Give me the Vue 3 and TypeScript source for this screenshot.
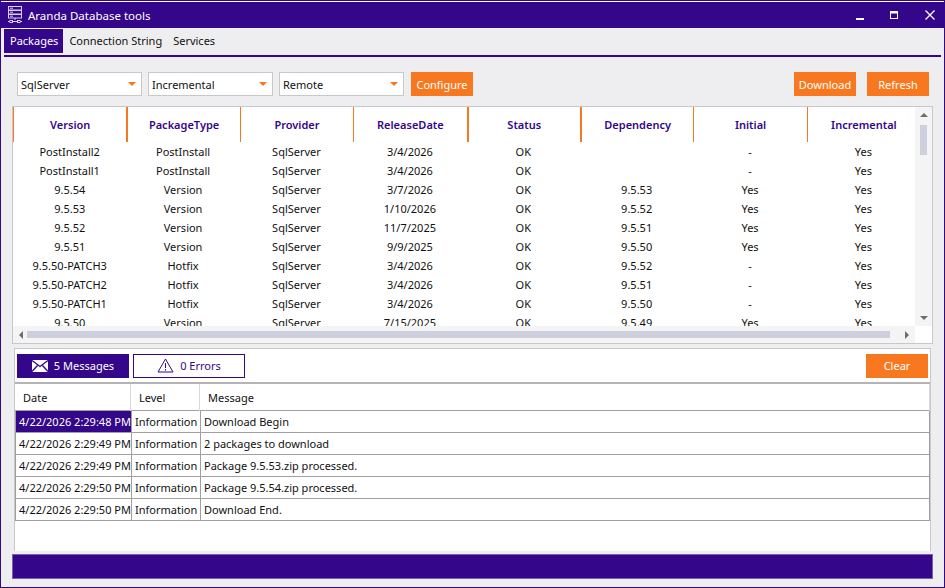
<template>
  <div class="window">
    <div class="titlebar">
      <svg class="app-icon" width="16" height="18" viewBox="0 0 16 18" fill="none" stroke="#d9cfee" stroke-width="1">
        <rect x="1.5" y="0.5" width="13" height="3.5" />
        <rect x="1.5" y="4.5" width="13" height="3.5" />
        <rect x="1.5" y="8.5" width="13" height="3.5" />
        <path d="M3 2.2h3M3 6.2h3M3 10.2h3M8 12v2" />
        <path d="M1 15.5h2M6 15.5h4M13 15.5h2" />
        <rect x="3" y="14.5" width="2.500" height="2" />
        <rect x="10.500" y="14.500" width="2.500" height="2" />
      </svg>
      <span class="app-title">Aranda Database tools</span>
      <div class="win-controls">
        <svg width="12" height="12" viewBox="0 0 12 12"><rect x="2" y="9" width="8" height="2" fill="#fff" /></svg>
        <svg width="12" height="12" viewBox="0 0 12 12" fill="none" stroke="#fff"><rect x="1.500" y="2.500" width="7" height="7" /><path d="M1 3.500h8" stroke-width="2" /></svg>
        <svg width="12" height="12" viewBox="0 0 12 12" fill="none" stroke="#fff" stroke-width="1.300"><path d="M1.500 1.500l9 9M10.500 1.500l-9 9" /></svg>
      </div>
    </div>

    <nav class="menu">
      <a v-for="(m, i) in menu" :key="m" class="menu-item" :class="{ active: i === 0 }">{{ m }}</a>
    </nav>

    <div class="toolbar">
      <div v-for="c in combos" :key="c" class="combo">
        <span>{{ c }}</span>
        <i class="caret"></i>
      </div>
      <button class="btn">Configure</button>
      <div class="spacer"></div>
      <button class="btn">Download</button>
      <button class="btn">Refresh</button>
    </div>

    <section class="packages">
      <div class="pkg-main">
        <div class="pkg-head">
          <div v-for="h in columns" :key="h.name" class="pkg-th" :class="{ thick: h.thick }">{{ h.name }}</div>
        </div>
        <div class="pkg-rows">
          <div v-for="r in packages" :key="r[0]" class="pkg-row">
            <div v-for="(cell, i) in r" :key="i" class="pkg-td">{{ cell }}</div>
          </div>
        </div>
      </div>
      <div class="vscroll">
        <i class="arrow up"></i>
        <div class="vthumb"></div>
        <div class="spacer"></div>
        <i class="arrow down"></i>
      </div>
      <div class="hscroll">
        <i class="arrow left"></i>
        <div class="hthumb"></div>
        <i class="arrow right"></i>
      </div>
      <div class="corner"></div>
    </section>

    <section class="log">
      <div class="log-bar">
        <button class="tab tab-on">
          <svg width="16" height="12" viewBox="0 0 16 12"><path fill="#fff" d="M0 0h16v12H0z" /><path fill="none" stroke="#34068a" stroke-width="1.300" d="M0 .5l8 6 8-6M0 11.500l5.500-6M16 11.500l-5.500-6" /></svg>
          5 Messages
        </button>
        <button class="tab tab-off">
          <svg width="17" height="15" viewBox="0 0 17 15" fill="none" stroke="#34068a"><path d="M8.500 1L1 14h15z" /><path d="M8.500 5v5M8.500 11v1.500" /></svg>
          0 Errors
        </button>
        <div class="spacer"></div>
        <button class="btn btn-clear">Clear</button>
      </div>
      <div class="grid-head">
        <div>Date</div>
        <div>Level</div>
        <div>Message</div>
      </div>
      <div v-for="(l, i) in logs" :key="i" class="grid-row">
        <div class="c-date" :class="{ selected: i === 0 }">{{ l.date }}</div>
        <div>Information</div>
        <div>{{ l.message }}</div>
      </div>
    </section>

    <div class="statusbar"></div>
  </div>
</template>

<script setup lang="ts">
const menu = ['Packages', 'Connection String', 'Services']
const combos = ['SqlServer', 'Incremental', 'Remote']

const columns = [
  { name: 'Version', thick: false },
  { name: 'PackageType', thick: true },
  { name: 'Provider', thick: false },
  { name: 'ReleaseDate', thick: false },
  { name: 'Status', thick: true },
  { name: 'Dependency', thick: true },
  { name: 'Initial', thick: false },
  { name: 'Incremental', thick: false }
]

const packages: string[][] = [
  ['PostInstall2', 'PostInstall', 'SqlServer', '3/4/2026', 'OK', '', '-', 'Yes'],
  ['PostInstall1', 'PostInstall', 'SqlServer', '3/4/2026', 'OK', '', '-', 'Yes'],
  ['9.5.54', 'Version', 'SqlServer', '3/7/2026', 'OK', '9.5.53', 'Yes', 'Yes'],
  ['9.5.53', 'Version', 'SqlServer', '1/10/2026', 'OK', '9.5.52', 'Yes', 'Yes'],
  ['9.5.52', 'Version', 'SqlServer', '11/7/2025', 'OK', '9.5.51', 'Yes', 'Yes'],
  ['9.5.51', 'Version', 'SqlServer', '9/9/2025', 'OK', '9.5.50', 'Yes', 'Yes'],
  ['9.5.50-PATCH3', 'Hotfix', 'SqlServer', '3/4/2026', 'OK', '9.5.52', '-', 'Yes'],
  ['9.5.50-PATCH2', 'Hotfix', 'SqlServer', '3/4/2026', 'OK', '9.5.51', '-', 'Yes'],
  ['9.5.50-PATCH1', 'Hotfix', 'SqlServer', '3/4/2026', 'OK', '9.5.50', '-', 'Yes'],
  ['9.5.50', 'Version', 'SqlServer', '7/15/2025', 'OK', '9.5.49', 'Yes', 'Yes']
]

const logs = [
  { date: '4/22/2026 2:29:48 PM', message: 'Download Begin' },
  { date: '4/22/2026 2:29:49 PM', message: '2 packages to download' },
  { date: '4/22/2026 2:29:49 PM', message: 'Package 9.5.53.zip processed.' },
  { date: '4/22/2026 2:29:50 PM', message: 'Package 9.5.54.zip processed.' },
  { date: '4/22/2026 2:29:50 PM', message: 'Download End.' }
]
</script>

<style>
html, body {
  margin: 0;
  overflow: hidden;
}
</style>

<style scoped>
.window {
  width: 945px;
  height: 588px;
  box-sizing: border-box;
  border: 1px solid #34068a;
  background: #eeeef0;
  display: flex;
  flex-direction: column;
  font-family: "Noto Sans", "Open Sans", sans-serif;
  font-size: 11px;
  color: #111;
  overflow: hidden;
}
.titlebar {
  height: 26px;
  border-top: 1px solid #fff;
  box-sizing: content-box;
  background: #34068a;
  display: flex;
  align-items: center;
  padding-left: 6px;
  color: #fff;
  flex: none;
}
.app-icon { margin-right: 5px; }
.app-title { font-size: 11.500px; }
.win-controls {
  margin-left: auto;
  display: flex;
  gap: 23px;
  padding-right: 8px;
}
.menu {
  display: flex;
  margin: 1px 3px 0;
  padding-bottom: 2px;
  border-bottom: 2px solid #34068a;
  flex: none;
}
.menu-item {
  height: 24px;
  line-height: 24px;
  padding: 0 5px 0 6px;
}
.menu-item.active {
  background: #34068a;
  color: #fff;
}
.toolbar {
  display: flex;
  align-items: center;
  margin: 15px 15px 0 16px;
  gap: 6px;
  height: 24px;
  flex: none;
}
.combo {
  width: 121px;
  height: 22px;
  background: #fff;
  border: 1px solid #c8c8c8;
  display: flex;
  align-items: center;
  justify-content: space-between;
  padding: 0 5px 0 3px;
  box-sizing: content-box;
  flex: none;
  width: 115px;
}
.caret {
  width: 0;
  height: 0;
  border-left: 4px solid transparent;
  border-right: 4px solid transparent;
  border-top: 4px solid #f7781e;
}
.spacer { flex: 1; }
.btn {
  width: 62px;
  height: 24px;
  border: 0;
  padding: 0;
  background: #f7781e;
  color: #fff;
  font: inherit;
}
.toolbar .btn:nth-of-type(1) { margin-left: 1px; }
.toolbar .btn:nth-of-type(3) { margin-left: 5px; }
.packages {
  margin: 10px 11px 0;
  height: 238px;
  box-sizing: border-box;
  border: 1px solid #c8c8c8;
  display: grid;
  grid-template-columns: 1fr 17px;
  grid-template-rows: 1fr 17px;
  flex: none;
  background: #fff;
}
.pkg-main {
  overflow: hidden;
  min-height: 0;
}
.pkg-head {
  display: grid;
  grid-template-columns: repeat(8, 113.400px);
  height: 35px;
}
.pkg-th {
  border-left: 1px solid #f7781e;
  display: flex;
  align-items: center;
  justify-content: center;
  font-weight: 600;
  color: #34068a;
}
.pkg-th.thick { border-left-width: 2px; }
.pkg-rows { padding-top: 0; }
.pkg-row {
  display: grid;
  grid-template-columns: repeat(8, 113.400px);
  height: 19px;
  line-height: 19px;
  text-align: center;
}
.vscroll {
  background: #f4f4f4;
  display: flex;
  flex-direction: column;
  align-items: center;
}
.vthumb {
  width: 7px;
  height: 30px;
  background: #cdcfdc;
  margin-top: 1px;
}
.hscroll {
  background: #f4f4f4;
  display: flex;
  align-items: center;
  padding: 0 6px;
}
.hthumb {
  height: 7px;
  flex: 1;
  background: #cdcfdc;
  margin: 0 15px 0 4px;
}
.corner { background: #fff; }
.arrow {
  width: 0;
  height: 0;
  border: 4px solid transparent;
  flex: none;
}
.arrow.up {
  border-bottom: 4px solid #6d6d6d;
  border-top-width: 0;
  margin-top: 6px;
  margin-bottom: 7px;
}
.arrow.down {
  border-top: 4px solid #6d6d6d;
  border-bottom-width: 0;
  margin-bottom: 6px;
}
.arrow.left {
  border-right: 4px solid #6d6d6d;
  border-left-width: 0;
}
.arrow.right {
  border-left: 4px solid #6d6d6d;
  border-right-width: 0;
}
.log {
  margin: 4px 13px 0;
  height: 203px;
  box-sizing: border-box;
  border: 1px solid #c8c8c8;
  border-bottom: 0;
  background: #fff;
  flex: none;
}
.log-bar {
  display: flex;
  align-items: center;
  gap: 4px;
  height: 35px;
  padding: 0 2px;
  border-bottom: 2px solid #b4b4b4;
  box-sizing: border-box;
}
.tab {
  width: 112px;
  height: 24px;
  box-sizing: border-box;
  border: 1px solid #34068a;
  font: inherit;
  display: flex;
  align-items: center;
  justify-content: center;
  gap: 6px;
  padding: 0;
}
.tab-on {
  background: #34068a;
  color: #fff;
}
.tab-off {
  background: #fff;
  color: #34068a;
}
.btn-clear { margin-right: 0; }
.grid-head,
.grid-row {
  display: grid;
  grid-template-columns: 116px 69px 1fr;
  margin-right: 0;
}
.grid-head {
  height: 27px;
  line-height: 27px;
  border-bottom: 1px solid #a0a0a0;
  box-sizing: border-box;
}
.grid-head > div {
  padding-left: 8px;
  border-right: 1px solid #d8d8d8;
}
.grid-row {
  height: 22px;
  line-height: 21px;
  box-sizing: border-box;
  border: 1px solid #a0a0a0;
  border-top: 0;
}
.grid-row > div {
  padding-left: 3px;
  border-right: 1px solid #a0a0a0;
}
.grid-row > div:last-child { border-right: 0; }
.c-date.selected {
  background: #34068a;
  color: #fff;
}
.statusbar {
  margin: 3px 11px 0;
  height: 25px;
  box-sizing: border-box;
  background: #34068a;
  border: 1px solid #7a5cb0;
  flex: none;
}
</style>
